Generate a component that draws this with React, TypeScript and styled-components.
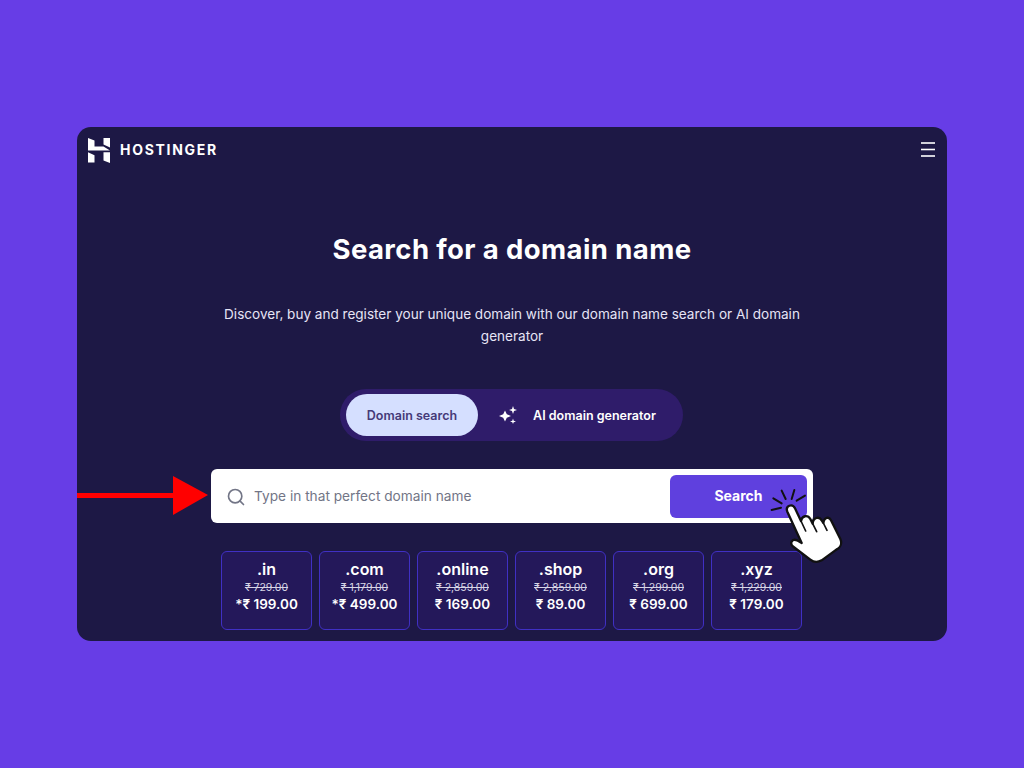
import styled, { createGlobalStyle } from "styled-components";
import { Search } from "lucide-react";

const GlobalStyle = createGlobalStyle`
  html, body {
    margin: 0;
    padding: 0;
    background: #673de6;
  }
  * { box-sizing: border-box; }
`;

const Page = styled.div`
  width: 1024px;
  height: 768px;
  padding-top: 127px;
  padding-left: 77px;
  background: #673de6;
  font-family: "Inter", "Liberation Sans", sans-serif;
  overflow: hidden;
`;

const Card = styled.main`
  position: relative;
  width: 870px;
  height: 514px;
  border-radius: 14px;
  background: #1d1845;
  color: #fff;
  display: flex;
  flex-direction: column;
  align-items: center;
`;

const Header = styled.header`
  width: 100%;
  height: 44px;
  padding: 10px 12px 0 11px;
  display: flex;
  align-items: flex-start;
  justify-content: space-between;
`;

const Brand = styled.div`
  display: flex;
  align-items: center;
  gap: 10px;
  font-size: 14px;
  font-weight: 700;
  letter-spacing: 1.7px;
  line-height: 26px;
`;

const MenuButton = styled.button`
  border: 0;
  padding: 0;
  background: none;
  color: #fff;
  margin-top: 5px;
  display: flex;
`;

const Title = styled.h1`
  margin: 60px 0 0;
  font-size: 27.5px;
  line-height: 36px;
  letter-spacing: 0.4px;
  font-weight: 700;
`;

const Lead = styled.p`
  margin: 36px 0 0;
  width: 600px;
  text-align: center;
  font-size: 13.55px;
  line-height: 22px;
  color: #e6e4f5;
`;

const Tabs = styled.div`
  margin: 42px 1px 0 0;
  width: 343px;
  height: 52px;
  padding: 5px 6px;
  border-radius: 26px;
  background: #2f1c6a;
  display: flex;
  align-items: center;
`;

const Tab = styled.div<{ $active?: boolean }>`
  height: 42px;
  border-radius: 21px;
  display: flex;
  align-items: center;
  justify-content: center;
  gap: 16px;
  font-size: 12.5px;
  font-weight: 600;
  width: ${(p) => (p.$active ? "132px" : "199px")};
  background: ${(p) => (p.$active ? "#d5dfff" : "transparent")};
  color: ${(p) => (p.$active ? "#453a78" : "#fff")};
`;

const SearchBox = styled.form`
  margin-top: 28px;
  width: 602px;
  height: 54px;
  padding: 6px 6px 5px 15px;
  border-radius: 6px;
  background: #fff;
  display: flex;
  align-items: center;
  color: #727586;
`;

const Placeholder = styled.span`
  flex: 1;
  margin: 0 0 2px 8px;
  font-size: 13.7px;
  color: #727586;
`;

const SearchButton = styled.button`
  width: 137px;
  height: 43px;
  border: 0;
  border-radius: 6px;
  padding: 0 0 2px;
  background: #5f40de;
  color: #fff;
  font-family: inherit;
  font-size: 14px;
  font-weight: 700;
`;

const Prices = styled.ul`
  list-style: none;
  margin: 28px 1px 0 0;
  padding: 0;
  display: flex;
  gap: 7px;
`;

const Price = styled.li`
  width: 91px;
  height: 79px;
  padding-top: 7px;
  border: 1px solid #4030c4;
  border-radius: 6px;
  background: #24185a;
  text-align: center;
`;

const Tld = styled.div`
  font-size: 16px;
  line-height: 20px;
  font-weight: 600;
`;

const OldPrice = styled.div`
  margin-top: 2px;
  font-size: 10.5px;
  line-height: 13px;
  color: #d8d6e6;
  text-decoration: line-through;
`;

const NewPrice = styled.div`
  margin-top: 1px;
  font-size: 13.5px;
  line-height: 18px;
  font-weight: 600;
`;

const ArrowMark = styled.svg`
  position: absolute;
  left: 0;
  top: 349px;
`;

const HandMark = styled.svg`
  position: absolute;
  left: 688px;
  top: 358px;
`;

const prices = [
  { tld: ".in", old: "₹ 729.00", now: "*₹ 199.00" },
  { tld: ".com", old: "₹ 1,179.00", now: "*₹ 499.00" },
  { tld: ".online", old: "₹ 2,859.00", now: "₹ 169.00" },
  { tld: ".shop", old: "₹ 2,859.00", now: "₹ 89.00" },
  { tld: ".org", old: "₹ 1,299.00", now: "₹ 699.00" },
  { tld: ".xyz", old: "₹ 1,229.00", now: "₹ 179.00" },
];

const Logo = () => (
  <svg width="22" height="25" viewBox="0 0 22 25" fill="#fff">
    <polygon points="0,0 6.5,2.6 6.5,8.6 15.5,8.6 22,12.6 0,12.6" />
    <polygon points="15.5,0 22,0 22,9.4 15.5,6.4" />
    <polygon points="0,14.2 6.5,17.2 6.5,24.5 0,24.5" />
    <polygon points="15.5,14.2 22,14.2 22,25 15.5,22.4" />
  </svg>
);

const Sparkles = () => (
  <svg width="18" height="18" viewBox="0 0 18 18" fill="#fff">
    <path d="M6 4.5 L7.8 8.2 L12 10 L7.8 11.8 L6 15.5 L4.2 11.8 L0 10 L4.2 8.2 Z" />
    <path d="M14 0 L15 3 L18 4 L15 5 L14 8 L13 5 L10 4 L13 3 Z" />
    <path d="M14 12.5 L14.7 14.8 L17 15.5 L14.7 16.2 L14 18 L13.3 16.2 L11 15.5 L13.3 14.8 Z" />
  </svg>
);

const MenuIcon = () => (
  <svg width="14" height="15" viewBox="0 0 14 15" stroke="#fff" strokeWidth="1.6">
    <line x1="0" y1="1" x2="14" y2="1" />
    <line x1="0" y1="7.5" x2="14" y2="7.5" />
    <line x1="0" y1="14" x2="14" y2="14" />
  </svg>
);

const App = () => {
  return (
    <Page>
      <GlobalStyle />
      <Card>
        <Header>
          <Brand>
            <Logo />
            HOSTINGER
          </Brand>
          <MenuButton type="button">
            <MenuIcon />
          </MenuButton>
        </Header>
        <Title>Search for a domain name</Title>
        <Lead>
          Discover, buy and register your unique domain with our domain name search or AI domain generator
        </Lead>
        <Tabs>
          <Tab $active>Domain search</Tab>
          <Tab>
            <Sparkles />
            AI domain generator
          </Tab>
        </Tabs>
        <SearchBox>
          <Search size={20} strokeWidth={2} />
          <Placeholder>Type in that perfect domain name</Placeholder>
          <SearchButton type="button">Search</SearchButton>
        </SearchBox>
        <Prices>
          {prices.map((p) => (
            <Price key={p.tld}>
              <Tld>{p.tld}</Tld>
              <OldPrice>{p.old}</OldPrice>
              <NewPrice>{p.now}</NewPrice>
            </Price>
          ))}
        </Prices>
        <ArrowMark width="136" height="40" viewBox="0 0 136 40" fill="#ff0000">
          <rect x="0" y="17" width="98" height="5" />
          <polygon points="96,0 131,19 96,39" />
        </ArrowMark>
        <HandMark width="85" height="85" viewBox="0 0 255 255">
          <g stroke="#111" strokeWidth="6" strokeLinecap="round" fill="none">
            <line x1="50" y1="17" x2="62" y2="42" />
            <line x1="88" y1="15" x2="80" y2="42" />
            <line x1="120" y1="32" x2="95" y2="47" />
            <line x1="25" y1="40" x2="50" y2="55" />
            <line x1="20" y1="75" x2="48" y2="68" />
          </g>
          <path
            d="M67 80 C60 62 82 54 90 70 L108 108 C110 92 128 88 136 102 L143 116 C144 98 162 92 170 106 L175 114 C178 96 192 94 198 106 L226 162 C232 176 226 188 214 194 L170 226 C156 234 146 232 136 224 L86 186 C72 176 80 160 96 166 L110 174 Z"
            fill="#fff"
            stroke="#111"
            strokeWidth="7"
            strokeLinejoin="round"
          />
          <g stroke="#111" strokeWidth="5" strokeLinecap="round" fill="none">
            <line x1="108" y1="108" x2="122" y2="138" />
            <line x1="143" y1="116" x2="155" y2="140" />
            <line x1="175" y1="114" x2="186" y2="136" />
          </g>
        </HandMark>
      </Card>
    </Page>
  );
};

export default App;
